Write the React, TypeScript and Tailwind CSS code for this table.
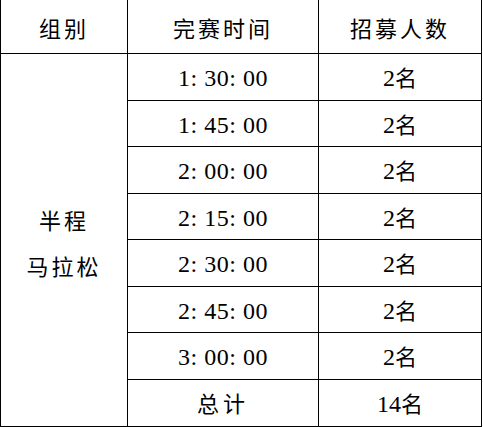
const rows = ["1: 30: 00", "1: 45: 00", "2: 00: 00", "2: 15: 00", "2: 30: 00", "2: 45: 00", "3: 00: 00"];
const heights = ["h-[47px]", "h-[46px]", "h-[47px]", "h-[46px]", "h-[47px]", "h-[46px]", "h-[47px]"];

export default function App() {
  return (
    <div
      className="w-[483px] h-[427px] bg-white text-black overflow-hidden"
      style={{ fontFamily: '"Liberation Serif", "Noto Sans CJK SC", serif' }}
    >
      <table className="table-fixed border-collapse w-[481px] text-center">
        <colgroup>
          <col className="w-[127px]" />
          <col className="w-[191px]" />
          <col className="w-[163px]" />
        </colgroup>
        <tbody>
          <tr className="h-[53px]">
            <td className="border-l border-black pt-[6px] text-[22px] tracking-[3px]">组别</td>
            <td className="border-l border-black pt-[6px] text-[22px] tracking-[3px]">完赛时间</td>
            <td className="border-l border-r border-black pt-[6px] text-[22px] tracking-[3px]">招募人数</td>
          </tr>
          {rows.map((t, i) => (
            <tr key={t} className={heights[i]}>
              {i === 0 && (
                <td rowSpan={8} className="border border-black pt-[10px] text-[22px] tracking-[3px] leading-[46px]">
                  半程
                  <br />
                  马拉松
                </td>
              )}
              <td className="border border-black text-[24px] tracking-[0.5px] pt-[3px]">{t}</td>
              <td className="border border-black text-[24px] pt-[3px]">
                2<span className="text-[22px]">名</span>
              </td>
            </tr>
          ))}
          <tr className="h-[47px]">
            <td className="border border-black text-[22px] tracking-[4px] pt-[3px]">总计</td>
            <td className="border border-black text-[24px] pt-[3px]">
              14<span className="text-[22px]">名</span>
            </td>
          </tr>
        </tbody>
      </table>
    </div>
  );
}
